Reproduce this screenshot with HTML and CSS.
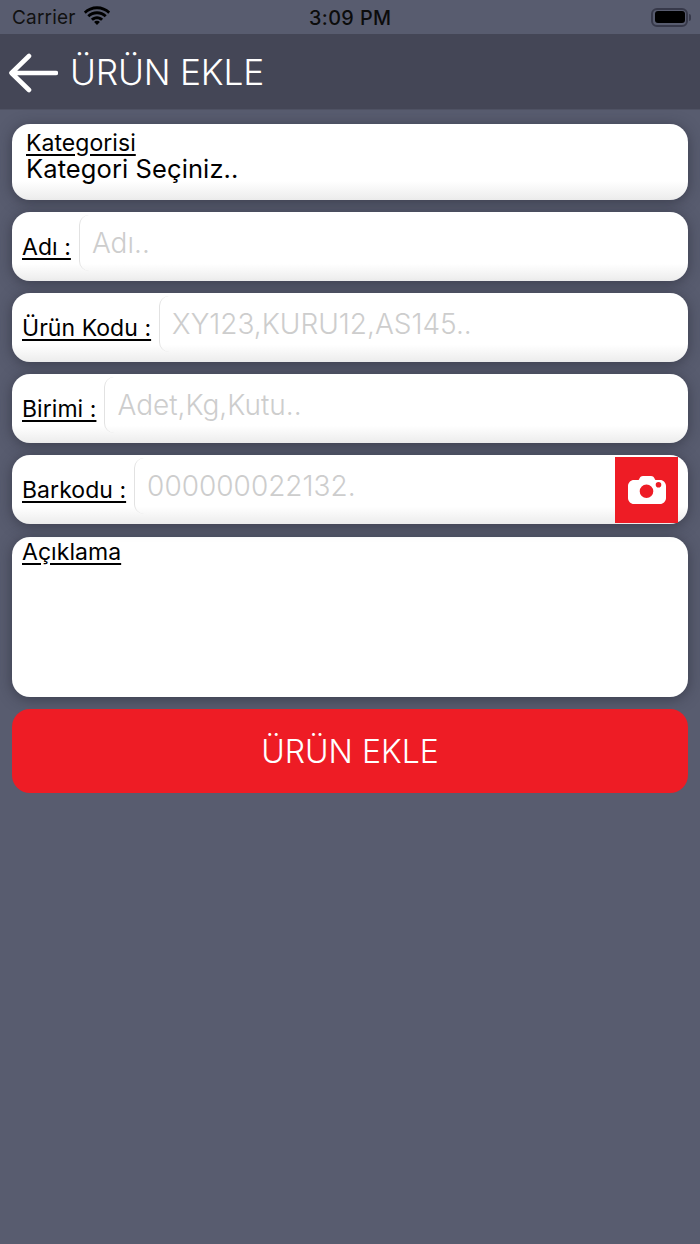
FILE: index.html
```html
<!DOCTYPE html>
<html lang="tr">
<head>
<meta charset="utf-8">
<title>Ürün Ekle</title>
<link rel="stylesheet" href="styles.css">
</head>
<body>
<div class="status">
  <div class="status-left">
    <span class="carrier">Carrier</span>
    <svg class="wifi" width="26" height="19" viewBox="0 0 26 19"><path d="M13 3.200c4.400 0 8.400 1.700 11.300 4.500l1.900-2.100C22.800 2.300 18.100.2 13 .2S3.200 2.300-.2 5.600l1.900 2.100C4.600 4.900 8.600 3.200 13 3.200z" fill="#000"/><path d="M13 8.300c3 0 5.700 1.200 7.700 3l2-2.100C20.100 6.700 16.700 5.200 13 5.200S5.900 6.700 3.300 9.200l2 2.100c2-1.800 4.700-3 7.700-3z" fill="#000"/><path d="M13 13.200c1.600 0 3 .6 4.100 1.600l2-2.100c-1.600-1.500-3.800-2.500-6.100-2.500s-4.500 1-6.100 2.500l2 2.100c1.100-1 2.500-1.600 4.100-1.600z" fill="#000"/><path d="M13 14.800c-1.100 0-2.100.4-2.900 1.100l2.900 3.100 2.900-3.100c-.8-.7-1.800-1.100-2.900-1.100z" fill="#000"/></svg>
  </div>
  <span class="time">3:09 PM</span>
  <div class="battery"><span class="battery-body"><span class="battery-fill"></span></span><span class="battery-cap"></span></div>
</div>
<header class="nav">
  <svg class="back" width="50" height="40" viewBox="0 0 50 40"><path d="M21 3 3.500 20 21 37M4 20H48" fill="none" stroke="#fff" stroke-width="4.600" stroke-linecap="round" stroke-linejoin="round"/></svg>
  <h1 class="title">ÜRÜN EKLE</h1>
</header>
<main class="form">
  <section class="card card-select">
    <span class="label label-select">Kategorisi</span>
    <span class="select-value">Kategori Seçiniz..</span>
  </section>
  <section class="card card-row">
    <span class="label">Adı :</span>
    <div class="field"><span class="placeholder">Adı..</span></div>
  </section>
  <section class="card card-row">
    <span class="label">Ürün Kodu :</span>
    <div class="field"><span class="placeholder">XY123,KURU12,AS145..</span></div>
  </section>
  <section class="card card-row">
    <span class="label">Birimi :</span>
    <div class="field"><span class="placeholder">Adet,Kg,Kutu..</span></div>
  </section>
  <section class="card card-row">
    <span class="label">Barkodu :</span>
    <div class="field"><span class="placeholder">000000022132.</span></div>
    <div class="camera">
      <svg width="40" height="32" viewBox="0 0 40 32"><path fill-rule="evenodd" d="M12 5.500C12.800 3 14.200 2 16 2h8c1.800 0 3.200 1 4 3.500L28.500 6H33c3.300 0 6 2.700 6 6v12c0 3.300-2.700 6-6 6H7c-3.300 0-6-2.700-6-6V12c0-3.300 2.700-6 6-6h4.500zM19.500 10.500a6.800 6.800 0 1 0 0 13.600 6.800 6.800 0 0 0 0-13.600zM31.500 8a2.800 2.800 0 1 0 0 5.600 2.800 2.800 0 0 0 0-5.600z" fill="#fff"/></svg>
    </div>
  </section>
  <section class="card card-text">
    <span class="label">Açıklama</span>
  </section>
  <button class="submit" type="button">ÜRÜN EKLE</button>
</main>
</body>
</html>
```
FILE: styles.css
```css
* { box-sizing: border-box; }
html, body { margin: 0; padding: 0; }
body {
  width: 700px;
  height: 1244px;
  overflow: hidden;
  background: #585c6f;
  font-family: Inter, "Noto Sans", "Liberation Sans", sans-serif;
  color: #000;
}
.status {
  height: 34px;
  display: flex;
  align-items: center;
  justify-content: space-between;
  padding: 0 9px 0 12px;
  position: relative;
}
.status-left { display: flex; align-items: center; gap: 8px; }
.carrier { font-size: 19px; letter-spacing: 0.2px; color: #111; }
.wifi { margin-top: -4px; }
.time { font-size: 19.800px; font-weight: 500; letter-spacing: 0.4px; position: absolute; left: 309px; top: 6px; color: #0c0c0c; }
.battery { display: flex; align-items: center; gap: 1px; }
.battery-body { width: 37px; height: 19px; border: 2px solid #37394a; border-radius: 6px; padding: 1.500px; display: block; }
.battery-fill { display: block; height: 100%; background: #000; border-radius: 3px; }
.battery-cap { width: 2px; height: 7px; background: #37394a; border-radius: 0 2px 2px 0; }
.nav {
  height: 76px;
  background: #444656;
  display: flex;
  align-items: center;
  padding-left: 8px;
  gap: 12px;
  border-bottom: 1px solid #4f5263;
}
.back { flex: none; margin-top: 2px; }
.title { margin: 0; font-size: 35.300px; font-weight: 300; color: #fff; letter-spacing: -0.2px; margin-top: 1px; }
.form { padding: 14px 12px 0; display: flex; flex-direction: column; gap: 12px; }
.card {
  background: linear-gradient(#fff 0, #fff 75%, #ececec 100%);
  border-radius: 18px;
  box-shadow: 0 2px 14px rgba(34, 36, 50, 0.55);
}
.label { font-size: 23px; line-height: 26px; text-decoration: underline; text-underline-offset: 3px; white-space: nowrap; letter-spacing: 0.05px; }
.card-select { height: 76px; display: flex; flex-direction: column; padding: 7px 14px 0; }
.label-select { line-height: 24px; }
.select-value { font-size: 25.500px; line-height: 27px; letter-spacing: 0.1px; }
.card-row { height: 69px; display: flex; align-items: center; padding: 0 10px 0 10px; position: relative; }
.field {
  flex: 1;
  height: 56px;
  margin-left: 8px;
  margin-top: -7px;
  border-left: 1px solid #e2e2e2;
  border-radius: 10px;
  padding-left: 12px;
  display: flex;
  align-items: center;
}
.placeholder { font-size: 28px; font-weight: 300; color: #cdcdcd; margin-top: -1px; white-space: nowrap; }
.camera {
  width: 63px;
  height: 66px;
  background: #ee1c25;
  display: flex;
  align-items: center;
  justify-content: center;
  position: absolute;
  right: 10px;
  top: 2px;
}
.card-text { height: 160px; margin-top: 1px; padding: 2px 10px; background: #fff; }
.submit {
  height: 84px;
  border: 0;
  border-radius: 18px;
  background: #ee1c25;
  color: #fff;
  font: 300 32px Inter, "Noto Sans", "Liberation Sans", sans-serif;
  padding: 0;
}
```
